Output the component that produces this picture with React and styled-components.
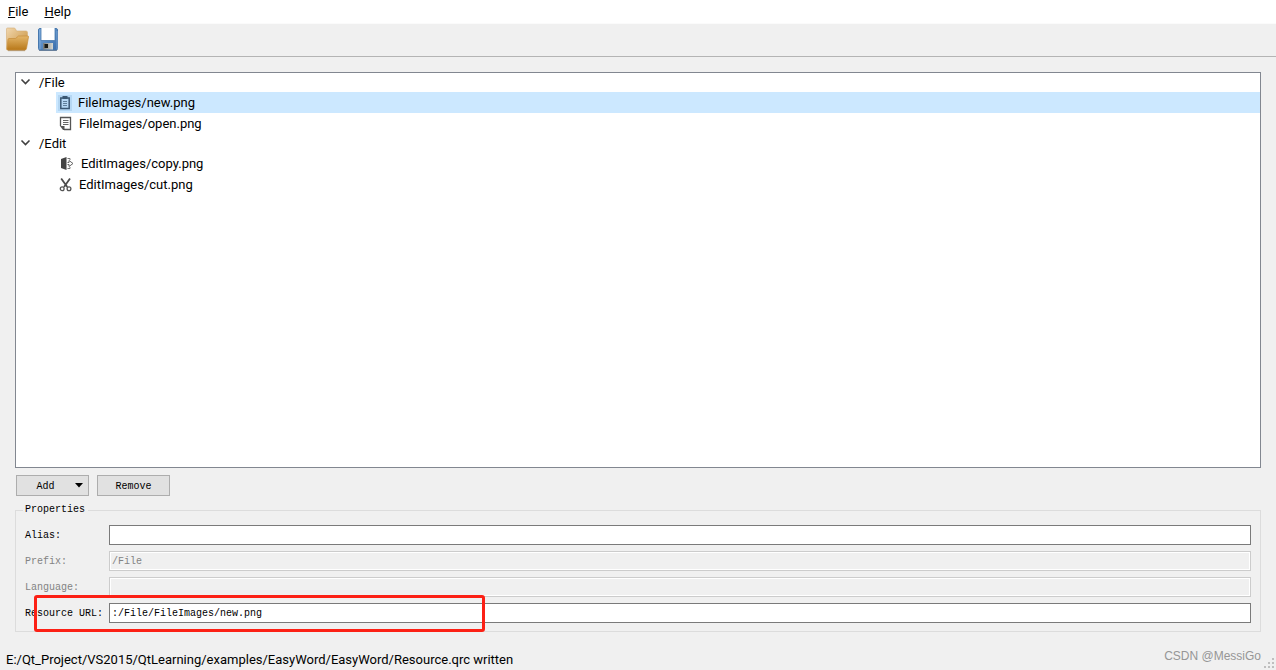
import React from "react";
import styled, { createGlobalStyle } from "styled-components";

const GlobalStyle = createGlobalStyle`
  * { box-sizing: border-box; }
  body {
    margin: 0;
    background: #f0f0f0;
    color: #000;
    font: 13px/18px Roboto, "Open Sans", sans-serif;
  }
`;

const Window = styled.div`
  display: flex;
  flex-direction: column;
  min-height: 100vh;
`;

const MenuBar = styled.nav`
  display: flex;
  align-items: flex-start;
  gap: 16px;
  height: 23px;
  padding: 3px 8px;
  background: #fff;
`;

const MenuButton = styled.button`
  padding: 0;
  border: 0;
  background: none;
  color: inherit;
  font: inherit;
`;

const ToolBar = styled.div`
  display: flex;
  gap: 7px;
  height: 34px;
  padding: 3px 5px;
  border-top: 1px solid #fbfbfb;
  border-bottom: 1px solid #b4b4b4;
`;

const ToolButton = styled.button`
  width: 24px;
  height: 26px;
  padding: 0;
  border: 0;
  background: none;

  svg { display: block; }
`;

const Main = styled.main`
  display: flex;
  flex: 1;
  flex-direction: column;
  gap: 7px;
  padding: 15px 15px 18px;
`;

const Tree = styled.ul`
  flex: 1;
  margin: 0;
  padding: 0;
  border: 1px solid #828790;
  background: #fff;
  list-style: none;
`;

const Branch = styled.ul`
  margin: 0;
  padding: 0 0 0 40px;
  list-style: none;
`;

const Prefix = styled.div`
  display: flex;
  align-items: flex-end;
  gap: 8px;
  height: 19px;
  padding-left: 4px;

  svg { margin-bottom: 4px; }
`;

const Leaf = styled.li`
  display: flex;
  align-items: center;
  gap: ${(p) => p.$gap}px;
  height: 21px;
  padding-left: 2px;
  background: ${(p) => (p.$selected ? "#cce8ff" : "transparent")};
`;

const Actions = styled.div`
  display: flex;
  gap: 8px;
  padding-left: 1px;
`;

const PushButton = styled.button`
  display: flex;
  align-items: flex-start;
  justify-content: center;
  gap: 20px;
  width: 73px;
  height: 21px;
  padding: 4px 0 0 ${(p) => (p.$menu ? "14px" : "0")};
  border: 1px solid #adadad;
  background: #e1e1e1;
  color: #000;
  font: 10px/14px "Liberation Mono", monospace;

  svg { margin-top: 3px; }
`;

const Group = styled.fieldset`
  min-width: 0;
  margin: 0;
  padding: 8px 9px;
  border: 1px solid #dcdcdc;
  font: 10px/14px "Liberation Mono", monospace;
`;

const Legend = styled.legend`
  margin-left: -2px;
  padding: 0 3px 0 2px;
`;

const Fields = styled.div`
  display: grid;
  gap: 6px;
`;

const Field = styled.div`
  position: relative;
  display: grid;
  grid-template-columns: 84px 1fr;
  align-items: center;
  color: ${(p) => (p.$disabled ? "#838383" : "#000")};

  label { padding-top: 2px; }
`;

const TextInput = styled.input`
  width: 100%;
  min-width: 0;
  height: 20px;
  padding: 0 2px;
  border: 1px solid #7a7a7a;
  border-radius: 0;
  outline: 0;
  background: #fff;
  color: #000;
  font: inherit;

  &:disabled {
    border-color: #ccc;
    background: #f0f0f0;
    box-shadow: inset 0 0 0 1px #fff;
    color: #838383;
  }
`;

const Highlight = styled.div`
  position: absolute;
  inset: -8px auto -9px 9px;
  width: 451px;
  border: 3px solid #fc2015;
  border-radius: 3px;
  pointer-events: none;
`;

const StatusBar = styled.footer`
  display: flex;
  align-items: flex-start;
  height: 20px;
  padding: 1px 2px 0 6px;
`;

const Watermark = styled.span`
  margin: -3px 3px 0 auto;
  color: #969696;
  font: 12px/16px "Liberation Sans", sans-serif;
`;

const Grip = styled.svg`
  align-self: flex-end;
  margin-bottom: 2px;
`;

const FolderIcon = () => (
  <svg width="24" height="26" viewBox="0 0 24 26" aria-hidden="true">
    <defs>
      <linearGradient id="folderBack" x1="0" y1="0" x2="1" y2="1">
        <stop offset="0" stopColor="#f1d7ae" />
        <stop offset="1" stopColor="#c68d36" />
      </linearGradient>
      <linearGradient id="folderFront" x1="0" y1="0" x2="0" y2="1">
        <stop offset="0" stopColor="#e4b66a" />
        <stop offset="1" stopColor="#b87819" />
      </linearGradient>
    </defs>
    <path d="M1.5 2q0-1 1-1h6.500q1 0 1.500 1l1 2h9.500q1.500 0 1.500 1.500V9L20 23H2.500q-1 0-1-1z" fill="url(#folderBack)" stroke="#d5ad73" strokeWidth=".6" />
    <path d="M4 11.500h6.500l3-2.500h9.500q.7 0 .5 1L21.500 21.500q-.3 1.500-1.500 1.500H3q-1.200 0-1-1.500l1-9q.2-1 1-1z" fill="url(#folderFront)" stroke="#c58d3b" strokeWidth=".7" />
    <path d="M3 23.700h17" stroke="#75501d" opacity=".4" />
  </svg>
);

const SaveIcon = () => (
  <svg width="24" height="26" viewBox="0 0 24 26" aria-hidden="true">
    <defs>
      <linearGradient id="diskBody" x1="0" y1="0" x2="1" y2="1">
        <stop offset="0" stopColor="#79a9dc" />
        <stop offset="1" stopColor="#376caa" />
      </linearGradient>
      <linearGradient id="diskShutter">
        <stop offset="0" stopColor="#777c7c" />
        <stop offset="1" stopColor="#d7d9d3" />
      </linearGradient>
    </defs>
    <rect x="2.500" y="1.500" width="19" height="21.500" rx="1.500" fill="url(#diskBody)" stroke="#4677ad" />
    <path d="M4 2.500v20M21 4v18" stroke="#8db4df" opacity=".65" />
    <rect x="5" y="1" width="14" height="12.500" fill="#fff" />
    <path d="M5 1v12.500h14V1" fill="none" stroke="#4778ad" strokeWidth=".8" />
    <rect x="7" y="16" width="10" height="6.500" fill="url(#diskShutter)" />
    <rect x="8.500" y="17" width="3.500" height="4" fill="#161916" />
    <path d="M3 23.500h18" stroke="#344d68" opacity=".5" />
  </svg>
);

const Chevron = () => (
  <svg width="11" height="12" viewBox="0 0 11 12" aria-hidden="true">
    <path d="M1.500 3.500l4 4 4-4" fill="none" stroke="#404040" strokeWidth="1.600" />
  </svg>
);

const NewIcon = () => (
  <svg width="14" height="16" viewBox="0 0 14 16" aria-hidden="true">
    <path d="M0 0h14v16H0z" fill="#b5d7f3" />
    <path d="M2.800 3h8.400v10.500H2.800z" fill="none" stroke="#3b5873" strokeWidth="1.500" />
    <path d="M4.500 1h5v3h-5z" fill="#3b5873" />
    <path d="M5 6.500h4M5 8.500h4M5 10.500h4" stroke="#5f7e99" />
  </svg>
);

const OpenIcon = () => (
  <svg width="14" height="16" viewBox="0 0 14 16" aria-hidden="true">
    <path d="M2.500 10V1.500h10v12H6" fill="none" stroke="#555" strokeWidth="1.300" />
    <path d="M5 4.500h5.500M5 6.500h5.500M5 8.500h5.500" stroke="#666" />
    <path d="M2 10h4.500v4H5z" fill="#555" />
  </svg>
);

const CopyIcon = () => (
  <svg width="15" height="16" viewBox="0 0 15 16" aria-hidden="true">
    <path d="M3 3l5.500-2v13L3 12z" fill="#444" />
    <path d="M9.500 2.500H12V4M9.500 12.500H12V11" fill="none" stroke="#777" />
    <path d="M9.500 6.500H11v-2l4 3-4 3v-2H9.500" fill="#fff" stroke="#666" />
  </svg>
);

const CutIcon = () => (
  <svg width="14" height="16" viewBox="0 0 14 16" aria-hidden="true">
    <path d="M3.200 1.500L9.300 10M12 1.500L6 10" fill="none" stroke="#4b4b4b" strokeWidth="1.800" />
    <circle cx="4.200" cy="11.800" r="1.900" fill="none" stroke="#555" strokeWidth="1.300" />
    <circle cx="11" cy="11.800" r="1.900" fill="none" stroke="#555" strokeWidth="1.300" />
  </svg>
);

const resources = [
  {
    prefix: "/File",
    files: [
      { name: "FileImages/new.png", Icon: NewIcon, gap: 6, selected: true },
      { name: "FileImages/open.png", Icon: OpenIcon, gap: 7 },
    ],
  },
  {
    prefix: "/Edit",
    files: [
      { name: "EditImages/copy.png", Icon: CopyIcon, gap: 8 },
      { name: "EditImages/cut.png", Icon: CutIcon, gap: 7 },
    ],
  },
];

const fields = [
  { id: "alias", label: "Alias:", value: "" },
  { id: "prefix", label: "Prefix:", value: "/File", disabled: true },
  { id: "language", label: "Language:", value: "", disabled: true },
  { id: "url", label: "Resource URL:", value: ":/File/FileImages/new.png", marked: true },
];

const gripDots = [[8, 0], [4, 4], [8, 4], [0, 8], [4, 8], [8, 8]];

export default function App() {
  return (
    <Window>
      <GlobalStyle />
      <MenuBar>
        <MenuButton><u>F</u>ile</MenuButton>
        <MenuButton><u>H</u>elp</MenuButton>
      </MenuBar>
      <ToolBar role="toolbar">
        <ToolButton aria-label="Open"><FolderIcon /></ToolButton>
        <ToolButton aria-label="Save"><SaveIcon /></ToolButton>
      </ToolBar>
      <Main>
        <Tree role="tree">
          {resources.map(({ prefix, files }) => (
            <li key={prefix} role="treeitem" aria-expanded="true">
              <Prefix><Chevron />{prefix}</Prefix>
              <Branch role="group">
                {files.map(({ name, Icon, gap, selected }) => (
                  <Leaf key={name} role="treeitem" aria-selected={!!selected} $selected={selected} $gap={gap}>
                    <Icon />{name}
                  </Leaf>
                ))}
              </Branch>
            </li>
          ))}
        </Tree>
        <Actions>
          <PushButton $menu>
            Add
            <svg width="8" height="5" viewBox="0 0 8 5" aria-hidden="true"><path d="M0 0h8L4 4.500z" /></svg>
          </PushButton>
          <PushButton>Remove</PushButton>
        </Actions>
        <Group>
          <Legend>Properties</Legend>
          <Fields>
            {fields.map(({ id, label, value, disabled, marked }) => (
              <Field key={id} $disabled={disabled}>
                <label htmlFor={id}>{label}</label>
                <TextInput id={id} defaultValue={value} disabled={disabled} />
                {marked && <Highlight />}
              </Field>
            ))}
          </Fields>
        </Group>
      </Main>
      <StatusBar>
        <span>E:/Qt_Project/VS2015/QtLearning/examples/EasyWord/EasyWord/Resource.qrc written</span>
        <Watermark>CSDN @MessiGo</Watermark>
        <Grip width="10" height="10" viewBox="0 0 10 10" aria-hidden="true">
          {gripDots.map(([x, y]) => <rect key={`${x}-${y}`} x={x} y={y} width="2" height="2" fill="#bfbfbf" />)}
        </Grip>
      </StatusBar>
    </Window>
  );
}
